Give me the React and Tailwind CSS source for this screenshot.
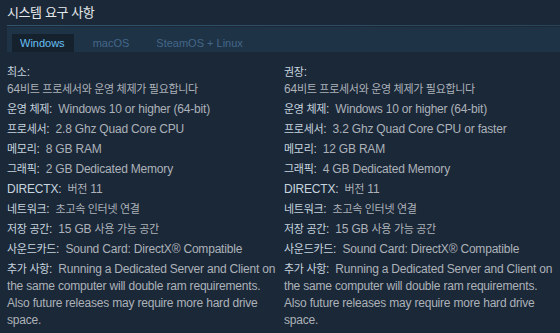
import React from "react";

const K = ({ children }) => (
  <span className="text-[11px] tracking-[-0.3px]">{children}</span>
);

const Row = ({ label, children }) => (
  <li className="mb-[3px] leading-[17px]">
    <span className="text-[#c6d4df]">
      <K>{label}</K>:
    </span>{" "}
    <span className="pl-[3px] text-[#acb2b8]">{children}</span>
  </li>
);

const Column = ({ title, cpu, ram, gpu }) => (
  <div className="pr-[4px] tracking-[-0.2px]">
    <div className="leading-[17px] text-[#c6d4df]">
      <K>{title}</K>:
    </div>
    <ul>
      <li className="mb-[3px] leading-[17px] text-[#acb2b8]">
        64<K>비트 프로세서와 운영 체제가 필요합니다</K>
      </li>
      <Row label="운영 체제">Windows 10 or higher (64-bit)</Row>
      <Row label="프로세서">{cpu}</Row>
      <Row label="메모리">{ram}</Row>
      <Row label="그래픽">{gpu}</Row>
      <li className="mb-[3px] leading-[17px]">
        <span className="text-[#c6d4df]">DIRECTX:</span>{" "}
        <span className="pl-[3px] text-[#acb2b8]">
          <K>버전</K> 11
        </span>
      </li>
      <Row label="네트워크">
        <K>초고속 인터넷 연결</K>
      </Row>
      <Row label="저장 공간">
        15 GB <K>사용 가능 공간</K>
      </Row>
      <Row label="사운드카드">Sound Card: DirectX® Compatible</Row>
      <Row label="추가 사항">
        Running a Dedicated Server and Client on the same computer will double ram
        requirements. Also future releases may require more hard drive space.
      </Row>
    </ul>
  </div>
);

export default function App() {
  return (
    <div className="w-[560px] h-[333px] overflow-hidden bg-[#1b2838] text-[12px] font-['Liberation_Sans','Noto_Sans_CJK_KR',Arial,sans-serif]">
      <div className="px-[7px] pt-[4px] pb-[3px] text-[13px] leading-[18px] tracking-[-0.4px] text-[#e5e9ec]">
        시스템 요구 사항
      </div>
      <div className="ml-[7px] h-px bg-gradient-to-r from-[#32546e] to-[#29445a]" />
      <div className="ml-[7px] mt-px flex items-end gap-[11px] h-[25px] pl-[5px] bg-[#1f3347] text-[11px]">
        <div className="h-[18px] pl-2 pr-[9px] bg-[#16212e] text-[#66c0f4] leading-[18px]">Windows</div>
        <div className="h-[18px] px-2 text-[#436789] leading-[18px]">macOS</div>
        <div className="h-[18px] px-2 text-[#436789] leading-[18px]">SteamOS + Linux</div>
      </div>
      <div className="grid grid-cols-[277px_1fr] pl-[7px] pt-[12px]">
        <Column
          title="최소"
          cpu="2.8 Ghz Quad Core CPU"
          ram="8 GB RAM"
          gpu="2 GB Dedicated Memory"
        />
        <Column
          title="권장"
          cpu="3.2 Ghz Quad Core CPU or faster"
          ram="12 GB RAM"
          gpu="4 GB Dedicated Memory"
        />
      </div>
    </div>
  );
}
